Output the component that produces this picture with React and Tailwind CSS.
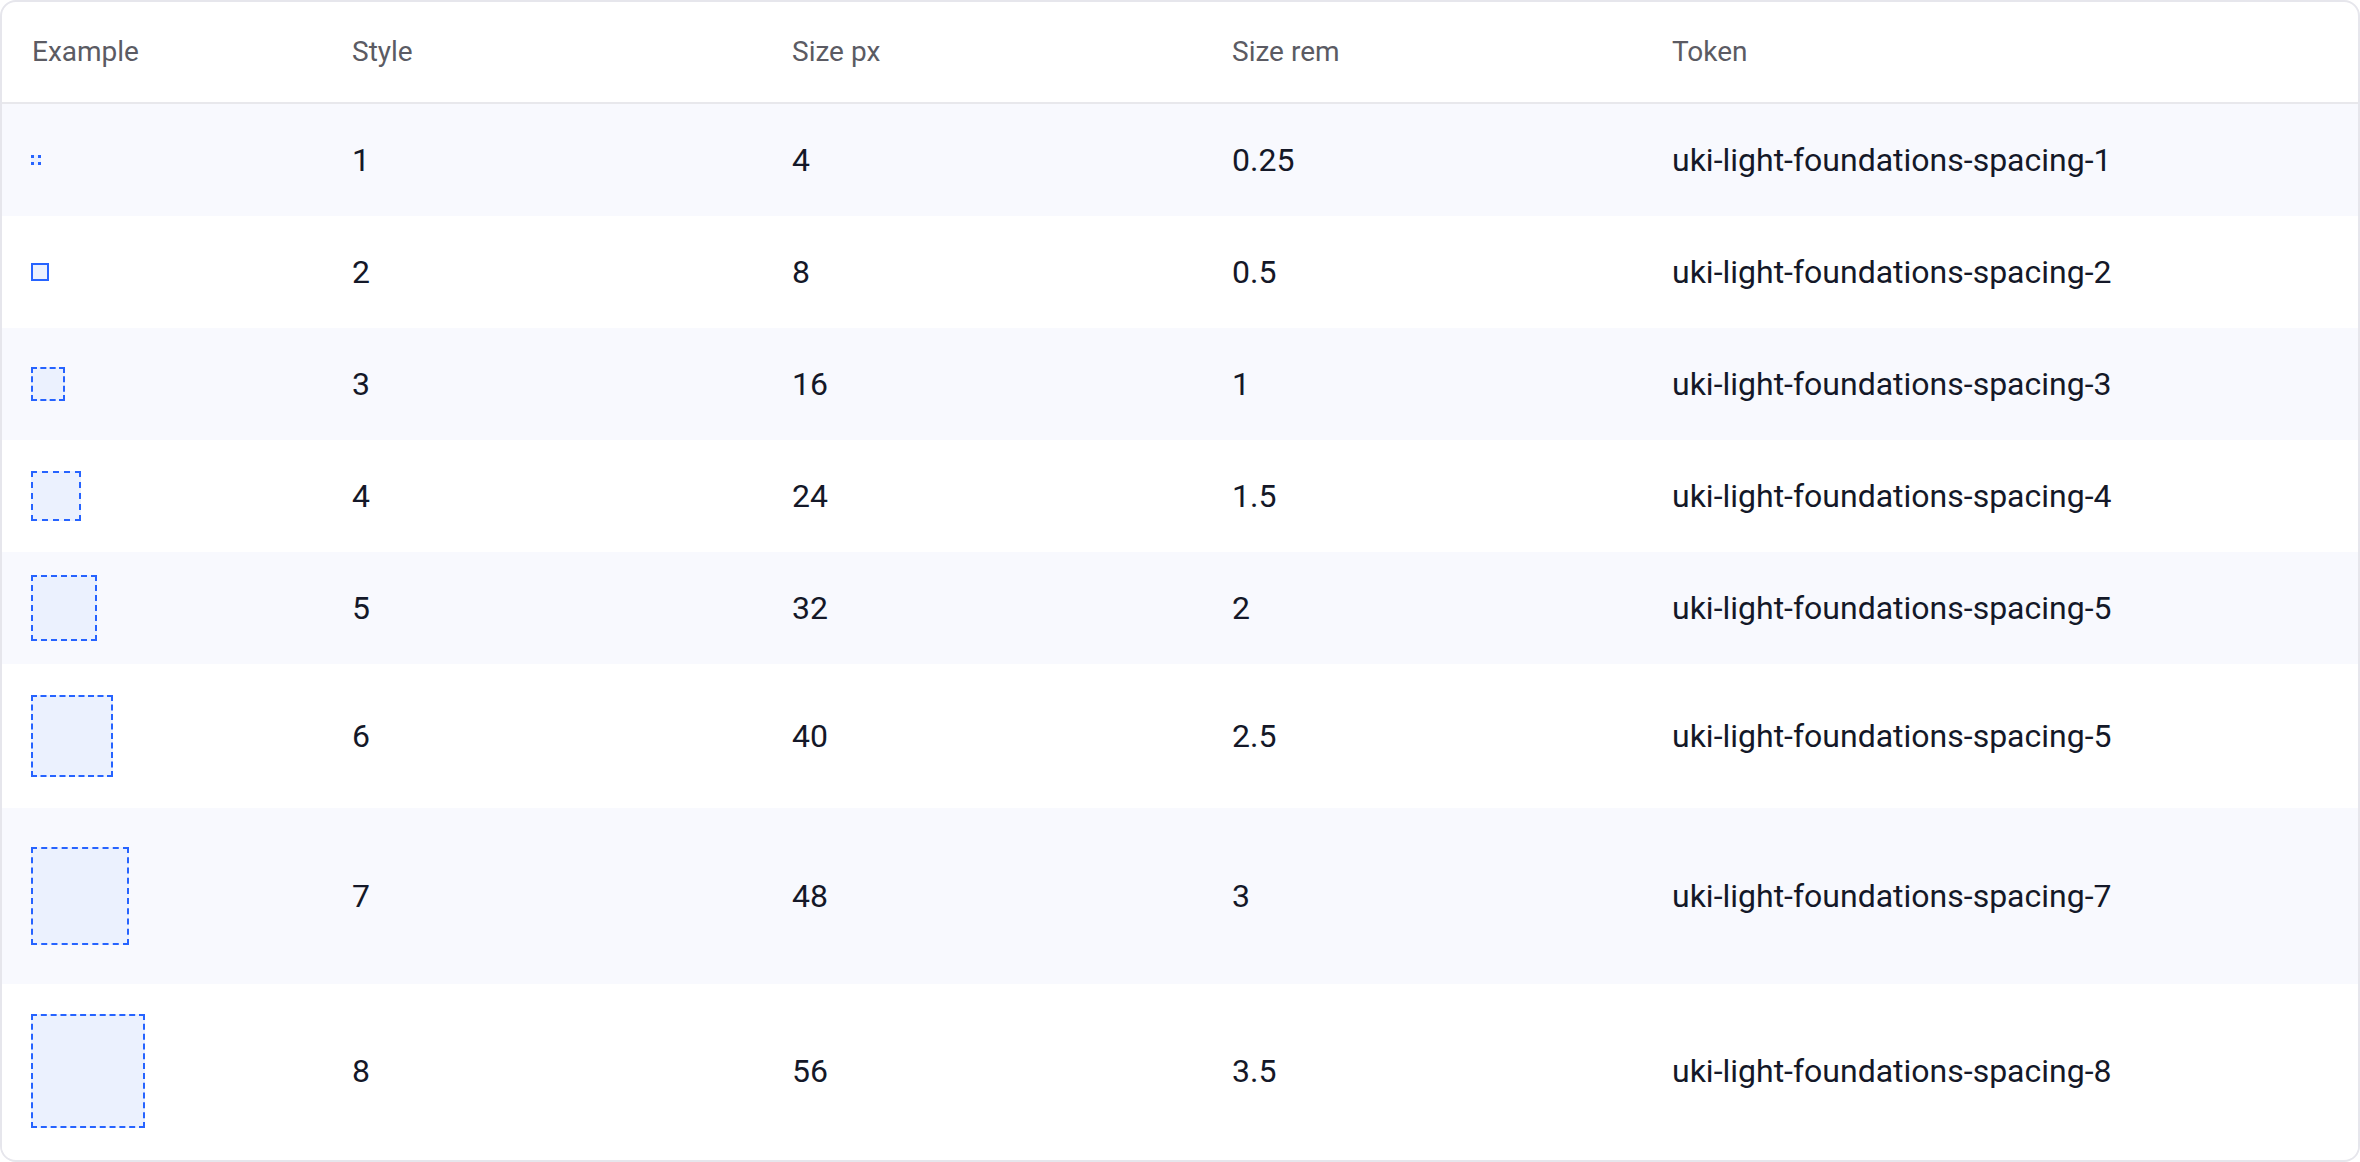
import React from "react";

const rows = [
  { style: "1", px: "4", rem: "0.25", token: "uki-light-foundations-spacing-1", box: "w-[10px] h-[10px]", h: "h-[112px]" },
  { style: "2", px: "8", rem: "0.5", token: "uki-light-foundations-spacing-2", box: "w-[18px] h-[18px] border-solid", h: "h-[112px]" },
  { style: "3", px: "16", rem: "1", token: "uki-light-foundations-spacing-3", box: "w-[34px] h-[34px] border-dashed", h: "h-[112px]" },
  { style: "4", px: "24", rem: "1.5", token: "uki-light-foundations-spacing-4", box: "w-[50px] h-[50px] border-dashed", h: "h-[112px]" },
  { style: "5", px: "32", rem: "2", token: "uki-light-foundations-spacing-5", box: "w-[66px] h-[66px] border-dashed", h: "h-[112px]" },
  { style: "6", px: "40", rem: "2.5", token: "uki-light-foundations-spacing-5", box: "w-[82px] h-[82px] border-dashed", h: "h-[144px]" },
  { style: "7", px: "48", rem: "3", token: "uki-light-foundations-spacing-7", box: "w-[98px] h-[98px] border-dashed", h: "h-[176px]" },
  { style: "8", px: "56", rem: "3.5", token: "uki-light-foundations-spacing-8", box: "w-[114px] h-[114px] border-dashed", h: "h-[174px]" },
];

const cols = "grid grid-cols-[320px_440px_440px_440px_1fr] items-center";

// the 4px swatch is too small for a dashed border, only the corners show
function TinySwatch() {
  return (
    <svg width="10" height="10" viewBox="0 0 10 10">
      <rect x="0" y="0" width="10" height="10" fill="#ebf1fe" />
      <rect x="0" y="0" width="3" height="3" fill="#2663ff" />
      <rect x="7" y="0" width="3" height="3" fill="#2663ff" />
      <rect x="0" y="7" width="3" height="3" fill="#2663ff" />
      <rect x="7" y="7" width="3" height="3" fill="#2663ff" />
    </svg>
  );
}

export default function App() {
  return (
    <div className="w-[2360px] h-[1162px] bg-white font-['Roboto',sans-serif]">
      <div className="h-full border-2 border-[#e6e6ec] rounded-2xl overflow-hidden">
        {/* Header */}
        <div
          className={`${cols} h-[102px] border-b-2 border-[#e8e8ec] text-[28px] text-[#5b5b63]`}
        >
          <div className="pl-[30px]">Example</div>
          <div className="pl-[30px]">Style</div>
          <div className="pl-[30px]">Size px</div>
          <div className="pl-[30px]">Size rem</div>
          <div className="pl-[30px]">Token</div>
        </div>

        {/* Rows */}
        {rows.map((row, i) => (
          <div
            key={row.style}
            className={`${cols} ${row.h} text-[32px] text-[#141828] ${
              i % 2 === 0 ? "bg-[#f8f9fe]" : "bg-white"
            }`}
          >
            <div className="pl-[29px] flex items-center">
              {i === 0 ? (
                <TinySwatch />
              ) : (
                <div
                  className={`${row.box} border-2 border-[#2663ff] bg-[#ebf1fe]`}
                />
              )}
            </div>
            <div className="pl-[30px]">{row.style}</div>
            <div className="pl-[30px]">{row.px}</div>
            <div className="pl-[30px]">{row.rem}</div>
            <div className="pl-[30px]">{row.token}</div>
          </div>
        ))}
      </div>
    </div>
  );
}
